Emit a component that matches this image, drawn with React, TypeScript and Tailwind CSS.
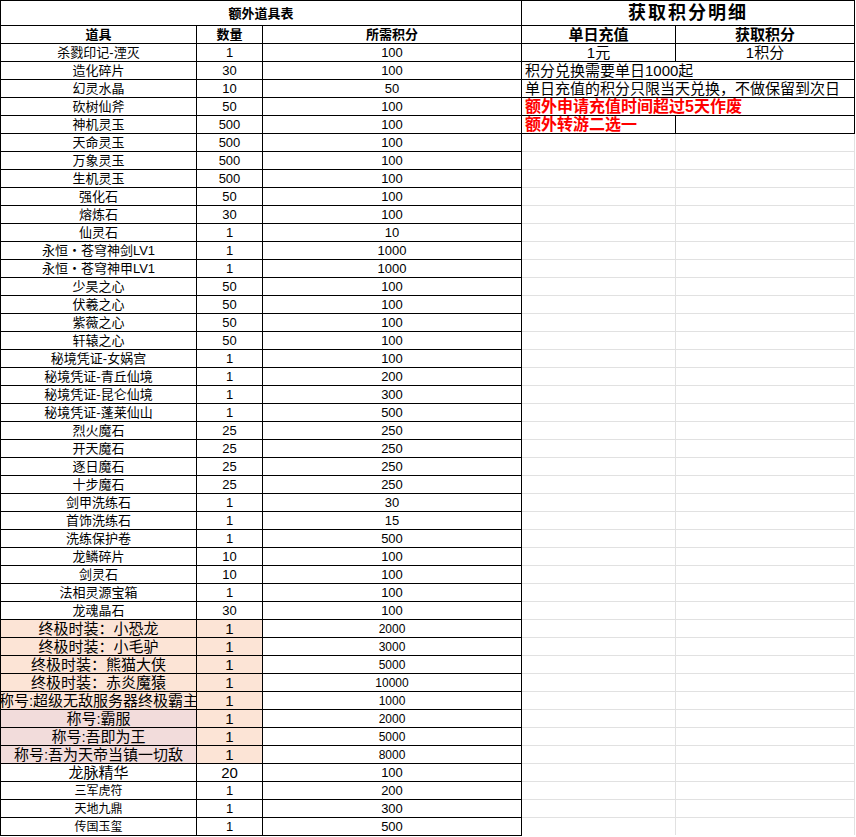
import React from "react";

type Row = [string, string, string];

const items: Row[] = [
  ["杀戮印记-湮灭", "1", "100"],
  ["造化碎片", "30", "100"],
  ["幻灵水晶", "10", "50"],
  ["砍树仙斧", "50", "100"],
  ["神机灵玉", "500", "100"],
  ["天命灵玉", "500", "100"],
  ["万象灵玉", "500", "100"],
  ["生机灵玉", "500", "100"],
  ["强化石", "50", "100"],
  ["熔炼石", "30", "100"],
  ["仙灵石", "1", "10"],
  ["永恒・苍穹神剑LV1", "1", "1000"],
  ["永恒・苍穹神甲LV1", "1", "1000"],
  ["少昊之心", "50", "100"],
  ["伏羲之心", "50", "100"],
  ["紫薇之心", "50", "100"],
  ["轩辕之心", "50", "100"],
  ["秘境凭证-女娲宫", "1", "100"],
  ["秘境凭证-青丘仙境", "1", "200"],
  ["秘境凭证-昆仑仙境", "1", "300"],
  ["秘境凭证-蓬莱仙山", "1", "500"],
  ["烈火魔石", "25", "250"],
  ["开天魔石", "25", "250"],
  ["逐日魔石", "25", "250"],
  ["十步魔石", "25", "250"],
  ["剑甲洗练石", "1", "30"],
  ["首饰洗练石", "1", "15"],
  ["洗练保护卷", "1", "500"],
  ["龙鳞碎片", "10", "100"],
  ["剑灵石", "10", "100"],
  ["法相灵源宝箱", "1", "100"],
  ["龙魂晶石", "30", "100"],
];

// 时装 rows are peach, 称号 rows pink (qty column stays peach)
const special: Row[] = [
  ["终极时装：小恐龙", "1", "2000"],
  ["终极时装：小毛驴", "1", "3000"],
  ["终极时装：熊猫大侠", "1", "5000"],
  ["终极时装：赤炎魔猿", "1", "10000"],
  ["称号:超级无敌服务器终极霸主", "1", "1000"],
  ["称号:霸服", "1", "2000"],
  ["称号:吾即为王", "1", "5000"],
  ["称号:吾为天帝当镇一切敌", "1", "8000"],
];

const tail: Row[] = [
  ["三军虎符", "1", "200"],
  ["天地九鼎", "1", "300"],
  ["传国玉玺", "1", "500"],
];

const Cell = ({
  children,
  className = "",
  bg = "bg-white",
}: {
  children?: React.ReactNode;
  className?: string;
  bg?: string;
}) => (
  <div
    className={`flex items-center overflow-hidden whitespace-nowrap leading-none ${bg} ${className}`}
  >
    {children}
  </div>
);

const C = "justify-center";
const L = "justify-start pl-[3px]";

export default function App() {
  return (
    <div
      className="flex w-[856px] h-[837px] bg-white text-black overflow-hidden"
      style={{ fontFamily: '"Liberation Sans", "Noto Sans CJK SC", sans-serif' }}
    >
      {/* 额外道具表 */}
      <div className="grid w-[522px] self-start grid-cols-[195px_65px_258px] grid-rows-[24px_17px] auto-rows-[17px] gap-px bg-black p-px">
        <Cell className={`${C} col-span-3 text-[13px] font-bold`}>额外道具表</Cell>
        <Cell className={`${C} text-[13px] font-bold`}>道具</Cell>
        <Cell className={`${C} text-[13px] font-bold`}>数量</Cell>
        <Cell className={`${C} text-[13px] font-bold`}>所需积分</Cell>

        {items.map(([name, qty, pts]) => (
          <React.Fragment key={name}>
            <Cell className={`${C} text-[13px]`}>{name}</Cell>
            <Cell className={`${C} text-[13px]`}>{qty}</Cell>
            <Cell className={`${C} text-[13px]`}>{pts}</Cell>
          </React.Fragment>
        ))}

        {special.map(([name, qty, pts], i) => (
          <React.Fragment key={name}>
            <Cell className={`${C} text-[15px]`} bg={i >= 5 ? "bg-[#f2dcdb]" : "bg-[#fce4d6]"}>
              {name}
            </Cell>
            <Cell className={`${C} text-[15px]`} bg="bg-[#fce4d6]">
              {qty}
            </Cell>
            <Cell className={`${C} text-[12px]`}>{pts}</Cell>
          </React.Fragment>
        ))}

        <Cell className={`${C} text-[15px]`}>龙脉精华</Cell>
        <Cell className={`${C} text-[15px]`}>20</Cell>
        <Cell className={`${C} text-[13px]`}>100</Cell>

        {tail.map(([name, qty, pts]) => (
          <React.Fragment key={name}>
            <Cell className={`${C} text-[12px]`}>{name}</Cell>
            <Cell className={`${C} text-[13px]`}>{qty}</Cell>
            <Cell className={`${C} text-[13px]`}>{pts}</Cell>
          </React.Fragment>
        ))}
      </div>

      {/* 获取积分明细 + empty sheet grid */}
      <div className="flex flex-col">
        <div className="grid w-[333px] grid-cols-[153px_178px] grid-rows-[24px_17px] auto-rows-[17px] gap-px bg-black py-px pr-px">
          <Cell className={`${C} col-span-2 text-[18px] font-semibold tracking-[2px]`}>获取积分明细</Cell>
          <Cell className={`${C} text-[15px] font-bold`}>单日充值</Cell>
          <Cell className={`${C} text-[15px] font-bold`}>获取积分</Cell>
          <Cell className={`${C} text-[15px]`}>1元</Cell>
          <Cell className={`${C} text-[15px]`}>1积分</Cell>
          <Cell className={`${L} col-span-2 text-[15px]`}>积分兑换需要单日1000起</Cell>
          <Cell className={`${L} col-span-2 text-[15px]`}>单日充值的积分只限当天兑换，不做保留到次日</Cell>
          <Cell className={`${L} col-span-2 text-[16px] font-bold text-[#ff0000]`}>
            额外申请充值时间超过5天作废
          </Cell>
          <Cell className={`${L} text-[16px] font-bold text-[#ff0000]`}>额外转游二选一</Cell>
          <Cell />
        </div>
        <div className="grid w-[333px] grid-cols-[153px_178px] auto-rows-[17px] gap-px bg-[#e1e1e1] pr-px">
          {Array.from({ length: 78 }).map((_, i) => (
            <div key={i} className="bg-white" />
          ))}
        </div>
      </div>
    </div>
  );
}
